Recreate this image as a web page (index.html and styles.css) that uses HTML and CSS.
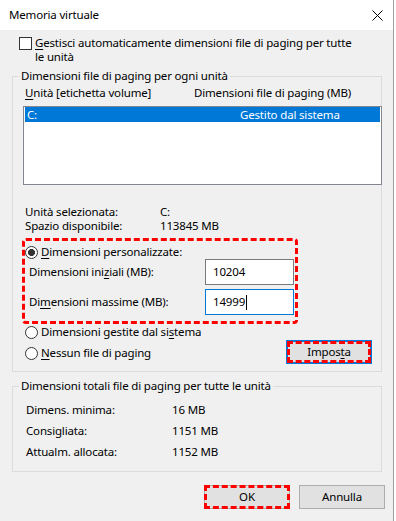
FILE: index.html
```html
<!DOCTYPE html>
<html lang="it">
<head>
  <meta charset="UTF-8" />
  <meta name="viewport" content="width=device-width, initial-scale=1" />
  <title>Memoria virtuale</title>
  <link rel="stylesheet" href="styles.css">
</head>
<body>
  <div class="window">
    <div class="titlebar">
      <span class="title">Memoria virtuale</span>
      <svg class="close" width="11" height="11" viewBox="0 0 11 11">
        <path d="M0.5 0.5L10.5 10.5M10.5 0.5L0.5 10.5" stroke="#000" stroke-width="1" fill="none" />
      </svg>
    </div>

    <div class="content">
      <div class="auto">
        <span class="checkbox"></span>
        <span><u>G</u>estisci automaticamente dimensioni file di paging per tutte<br>le unità</span>
      </div>

      <fieldset class="group drives">
        <legend>Dimensioni file di paging per ogni unità</legend>
        <div class="cols">
          <span class="col1"><u>U</u>nità [etichetta volume]</span>
          <span>Dimensioni file di paging (MB)</span>
        </div>
        <div class="listbox">
          <div class="row selected">
            <span class="cell1">C:</span>
            <span>Gestito dal sistema</span>
          </div>
        </div>

        <div class="info">
          <div class="kv"><span class="key">Unità selezionata:</span><span>C:</span></div>
          <div class="kv"><span class="key">Spazio disponibile:</span><span>113845 MB</span></div>
        </div>

        <div class="custom">
          <div class="radio-row">
            <span class="radio checked"></span>
            <span><u>D</u>imensioni personalizzate:</span>
          </div>
          <div class="field">
            <span>Dimensioni ini<u>z</u>iali (MB):</span>
            <span class="input">10204</span>
          </div>
          <div class="field second">
            <span>Di<u>m</u>ensioni massime (MB):</span>
            <span class="input focus">14999<span class="caret"></span></span>
          </div>
        </div>

        <div class="options">
          <div class="radios">
            <div class="radio-row first">
              <span class="radio"></span>
              <span>Dimensioni gestite dal si<u>s</u>tema</span>
            </div>
            <div class="radio-row second">
              <span class="radio"></span>
              <span><u>N</u>essun file di paging</span>
            </div>
          </div>
          <button class="btn set">Impos<u>t</u>a</button>
        </div>
      </fieldset>

      <fieldset class="group totals">
        <legend>Dimensioni totali file di paging per tutte le unità</legend>
        <div class="totals-rows">
          <div class="kv"><span class="key">Dimens. minima:</span><span>16 MB</span></div>
          <div class="kv"><span class="key">Consigliata:</span><span>1151 MB</span></div>
          <div class="kv"><span class="key">Attualm. allocata:</span><span>1152 MB</span></div>
        </div>
      </fieldset>

      <div class="footer">
        <button class="btn ok">OK</button>
        <button class="btn">Annulla</button>
      </div>
    </div>
  </div>
</body>
</html>
```

FILE: styles.css
```css
body {
  margin: 0;
  background: #fff;
  font-family: 'Segoe UI', 'Noto Sans', sans-serif;
  font-size: 11.5px;
  letter-spacing: -0.17px;
  line-height: 14px;
  color: #000;
}
u {
  text-decoration-thickness: 1px;
  text-underline-offset: 2px;
}
.window {
  width: 393px;
  height: 521px;
  border-right: 1px solid #a0a0a0;
  display: flex;
  flex-direction: column;
}
.titlebar {
  height: 30px;
  flex: none;
  background: #fff;
  display: flex;
  align-items: center;
  justify-content: space-between;
  padding: 0 10px 0 9px;
}
.close {
  display: block;
}
.content {
  flex: 1;
  background: #f0f0f0;
}

/* checkbox in cima */
.auto {
  display: flex;
  align-items: flex-start;
  padding: 6px 0 0 19px;
}
.checkbox {
  width: 13px;
  height: 13px;
  box-sizing: border-box;
  border: 1px solid #333;
  background: #fff;
  margin: 1px 3px 0 0;
  flex: none;
}

/* gruppi */
.group {
  width: 370px;
  box-sizing: border-box;
  margin: 5px 0 0 12px;
  padding: 0 0 7px 0;
  border: 1px solid #dcdcdc;
  min-width: 0;
}
.group legend {
  padding: 0 2px;
  margin-left: 6px;
  line-height: 14px;
}
.cols {
  display: flex;
  margin: 3px 0 0 12px;
}
.col1 {
  width: 169px;
}
.listbox {
  margin: 6px 0 0 10px;
  width: 359px;
  height: 79px;
  box-sizing: border-box;
  border: 1px solid #828790;
  background: #fff;
  padding: 0 1px;
}
.row {
  display: flex;
  height: 15px;
  line-height: 15px;
  padding-left: 2px;
}
.row.selected {
  background: #0078d7;
  color: #fff;
}
.cell1 {
  width: 213px;
}
.info {
  margin: 20px 0 0 12px;
}
.kv {
  display: flex;
}
.info .key {
  width: 135px;
}

/* riquadro evidenziato */
.custom {
  width: 276px;
  box-sizing: border-box;
  margin: 5px 0 0 9px;
  border: 3px dashed #f00;
  border-radius: 4px;
  padding: 4px 1px 6px 0;
}
.radio-row {
  display: flex;
  align-items: center;
  height: 14px;
}
.radio {
  width: 13px;
  height: 13px;
  box-sizing: border-box;
  border: 1px solid #333;
  border-radius: 50%;
  background: #fff;
  margin-right: 3px;
  flex: none;
}
.radio.checked {
  background: radial-gradient(circle, #333 0 3.2px, #fff 3.8px);
}
.field {
  display: flex;
  align-items: center;
  justify-content: space-between;
  padding-left: 4px;
  height: 26px;
}
.field.second {
  margin-top: 4px;
}
.input {
  width: 89px;
  height: 26px;
  box-sizing: border-box;
  border: 1px solid #7a7a7a;
  background: #fff;
  padding-left: 7px;
  display: flex;
  align-items: center;
}
.input.focus {
  border-color: #0078d7;
}
.caret {
  width: 1px;
  height: 15px;
  background: #000;
  margin-left: 1px;
}

.options {
  display: flex;
  justify-content: space-between;
  align-items: flex-start;
  margin-left: 12px;
}
.radio-row.first {
  margin-top: 1px;
}
.radio-row.second {
  margin-top: 7px;
}

/* pulsanti */
.btn {
  font: inherit;
  letter-spacing: inherit;
  color: #000;
  width: 86px;
  height: 24px;
  background: #e1e1e1;
  border: 1px solid #adadad;
  padding: 0;
  line-height: 20px;
}
.btn.set {
  margin: 16px 9px 0 0;
  border: 2px solid #0078d7;
  outline: 3px dashed #f00;
  outline-offset: -4px;
}
.btn.ok {
  outline: 3px dashed #f00;
  outline-offset: -3px;
}

.totals {
  margin-top: 7px;
  padding-bottom: 9px;
}
.totals-rows {
  margin: 6px 0 0 13px;
}
.totals-rows .kv {
  line-height: 21px;
}
.totals-rows .key {
  width: 146px;
}

.footer {
  display: flex;
  justify-content: flex-end;
  gap: 9px;
  margin-top: 13px;
  padding-right: 8px;
}
```
